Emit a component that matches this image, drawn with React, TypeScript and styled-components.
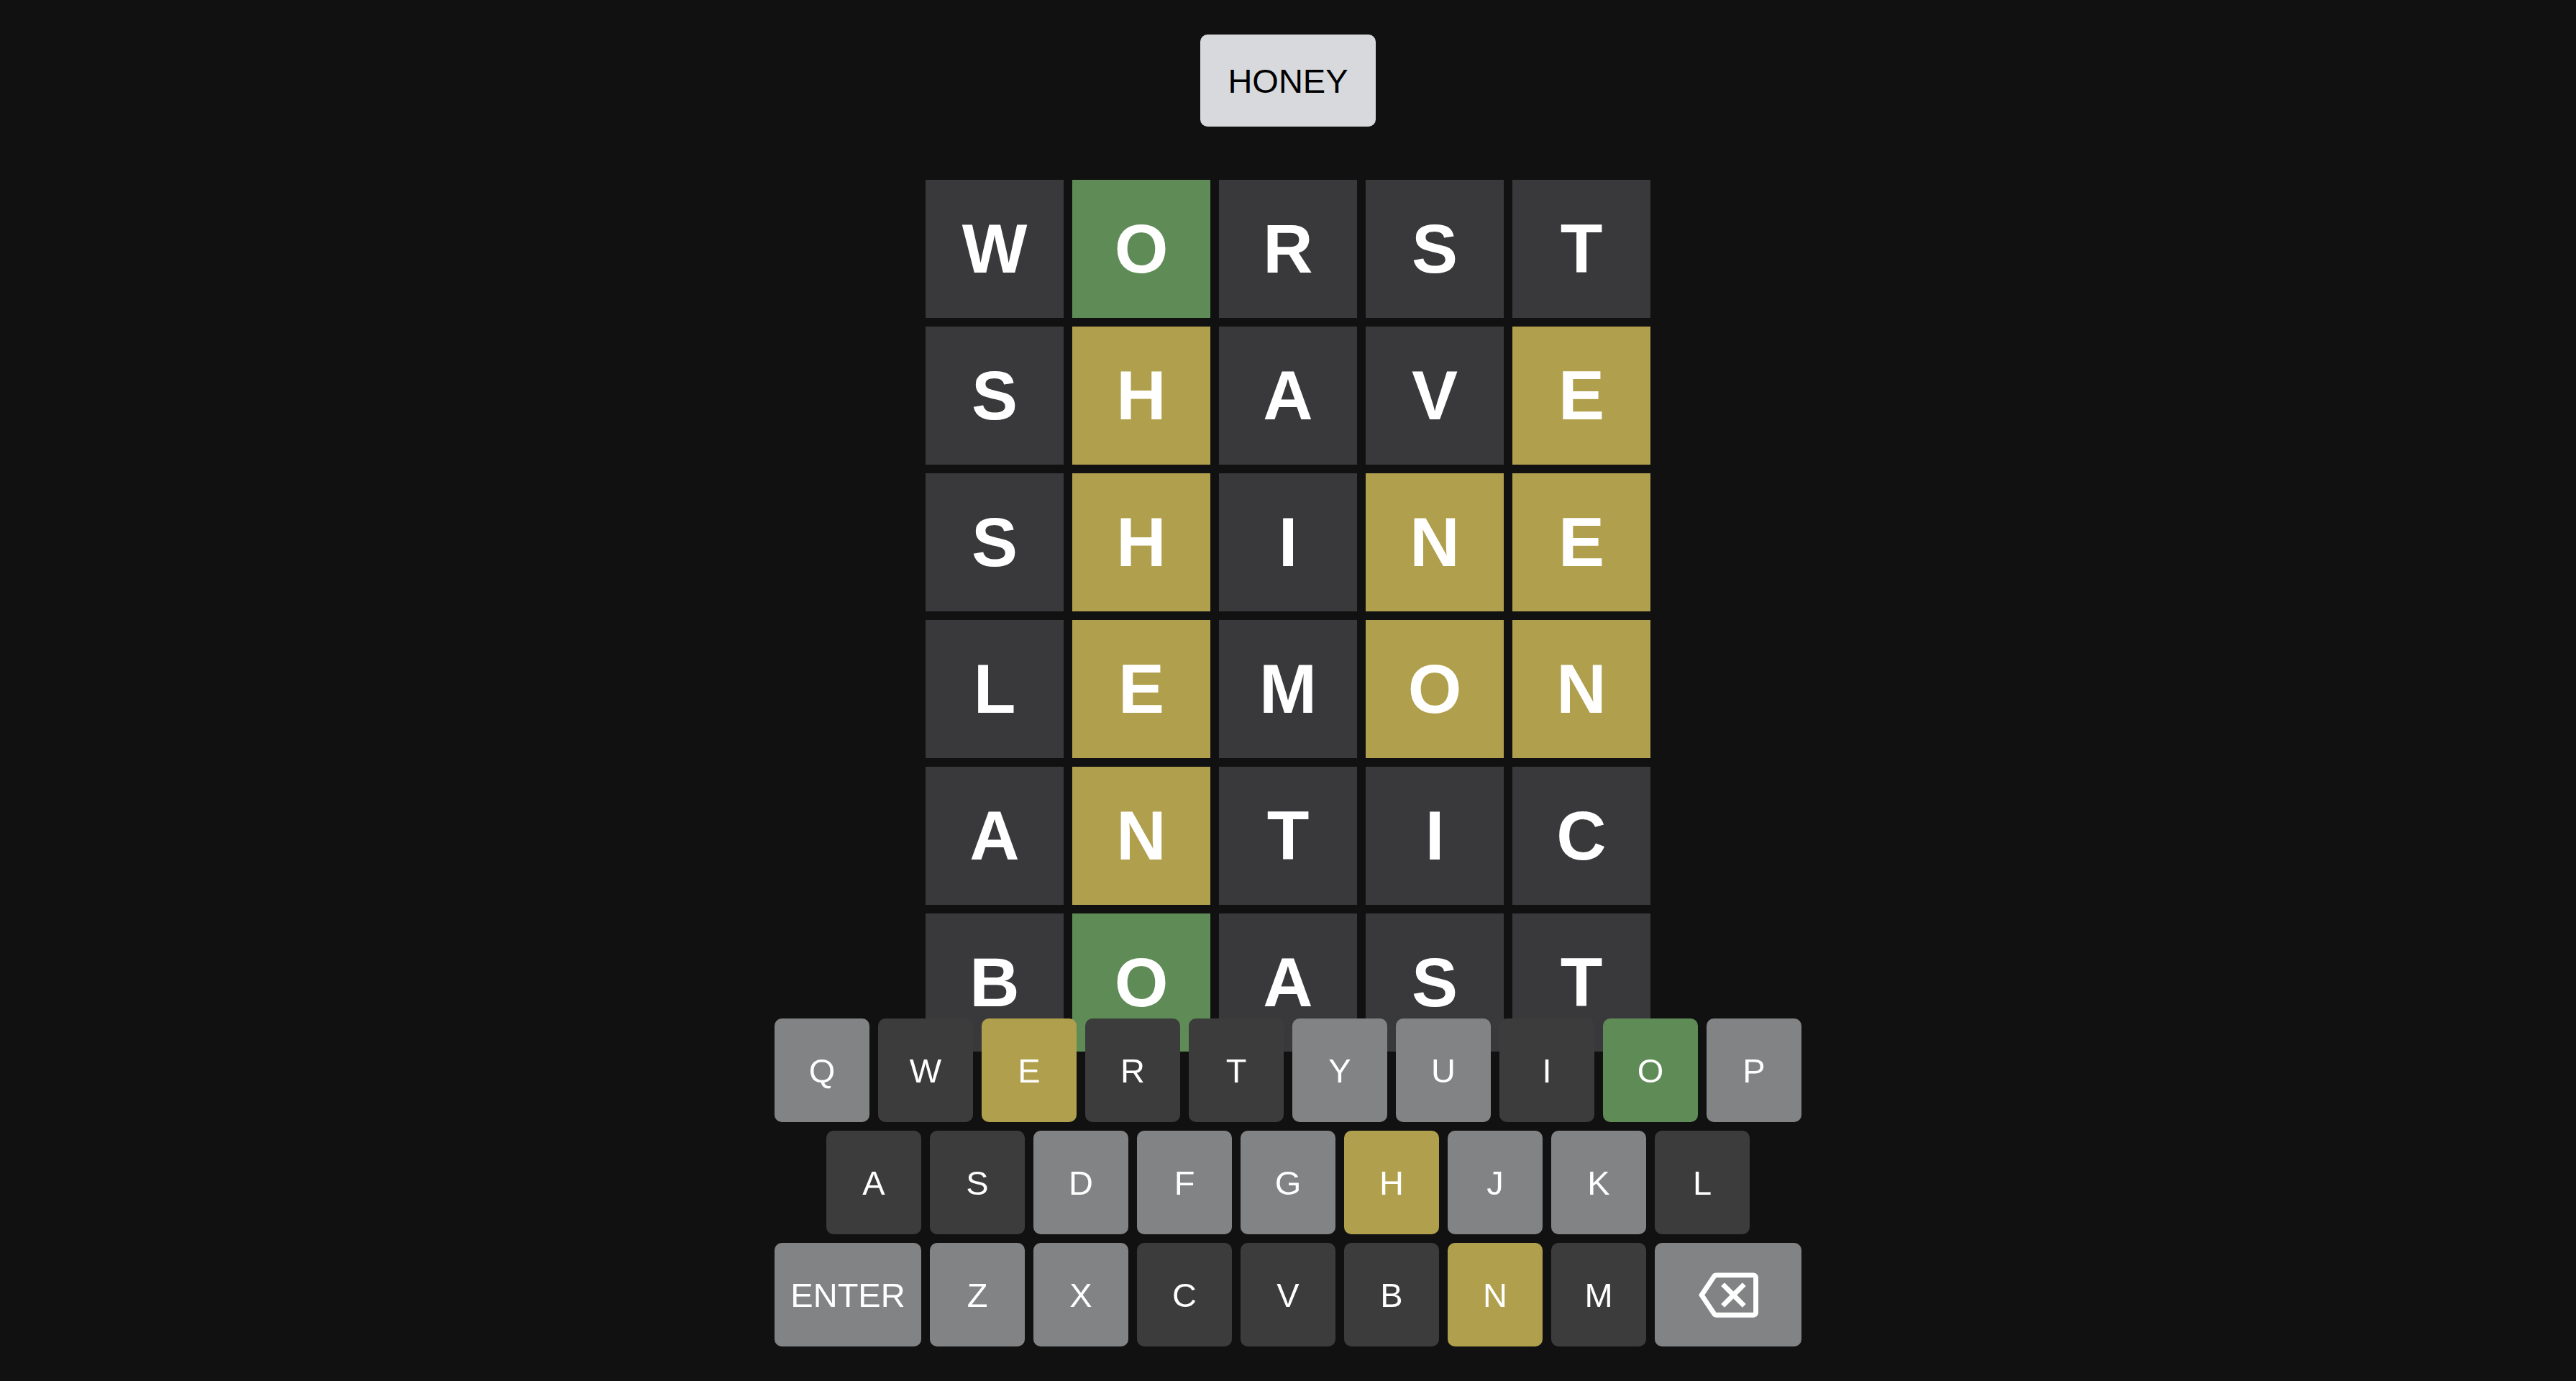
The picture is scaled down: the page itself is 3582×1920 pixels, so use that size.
import React from "react";
import styled, { createGlobalStyle } from "styled-components";

type TileState = "absent" | "present" | "correct";
type KeyState = "unused" | "absent" | "present" | "correct";

const GlobalStyle = createGlobalStyle`
  html, body {
    margin: 0;
    padding: 0;
    background: #111111;
    font-family: "Liberation Sans", Arial, sans-serif;
  }
  #root {
    min-height: 100vh;
  }
`;

const Page = styled.main`
  min-height: 100vh;
  display: flex;
  flex-direction: column;
  align-items: center;
  padding-top: 48px;
  box-sizing: border-box;
`;

const AnswerButton = styled.button`
  width: 244px;
  height: 128px;
  border: none;
  border-radius: 10px;
  background: #d8d9dc;
  color: #000000;
  font-family: "Liberation Sans", Arial, sans-serif;
  font-size: 47px;
  font-weight: 400;
  display: flex;
  align-items: center;
  justify-content: center;
  padding: 0;
  margin-bottom: 74px;
  cursor: pointer;
`;

const Board = styled.div`
  display: grid;
  grid-template-columns: repeat(5, 192px);
  grid-auto-rows: 192px;
  gap: 12px;
`;

const tileColors: Record<TileState, string> = {
  absent: "#39393c",
  present: "#b09f4c",
  correct: "#5f8c56",
};

const Tile = styled.div<{ $state: TileState }>`
  background: ${(p) => tileColors[p.$state]};
  color: #ffffff;
  display: flex;
  align-items: center;
  justify-content: center;
  font-family: "Liberation Sans", Arial, sans-serif;
  font-weight: 700;
  font-size: 96px;
  line-height: 1;
`;

const Keyboard = styled.div`
  position: fixed;
  left: 0;
  right: 0;
  bottom: 48px;
  display: flex;
  flex-direction: column;
  align-items: center;
  gap: 12px;
`;

const KeyRow = styled.div`
  display: flex;
  gap: 12px;
`;

const keyColors: Record<KeyState, string> = {
  unused: "#818384",
  absent: "#3b3c3b",
  present: "#b09f4c",
  correct: "#5f8c56",
};

const Key = styled.button<{ $state: KeyState; $wide?: boolean }>`
  width: ${(p) => (p.$wide ? "204px" : "132px")};
  height: 144px;
  border: none;
  border-radius: 10px;
  background: ${(p) => keyColors[p.$state]};
  color: #ffffff;
  font-family: "Liberation Sans", Arial, sans-serif;
  font-size: 47px;
  font-weight: 400;
  display: flex;
  align-items: center;
  justify-content: center;
  padding: 0;
  cursor: pointer;
`;

const BackspaceIcon = () => (
  <svg width="83" height="83" viewBox="0 0 24 24" aria-hidden="true">
    <path
      fill="#ffffff"
      d="M22 3H7c-.69 0-1.23.35-1.59.88L0 12l5.41 8.11c.36.53.9.89 1.59.89h15c1.1 0 2-.9 2-2V5c0-1.1-.9-2-2-2zm0 16H7.07L2.4 12l4.66-7H22v14zm-11.59-2L14 13.41 17.59 17 19 15.59 15.41 12 19 8.41 17.59 7 14 10.59 10.41 7 9 8.41 12.59 12 9 15.59z"
    />
  </svg>
);

const A: TileState = "absent";
const P: TileState = "present";
const C: TileState = "correct";

const guesses: { word: string; states: TileState[] }[] = [
  { word: "WORST", states: [A, C, A, A, A] },
  { word: "SHAVE", states: [A, P, A, A, P] },
  { word: "SHINE", states: [A, P, A, P, P] },
  { word: "LEMON", states: [A, P, A, P, P] },
  { word: "ANTIC", states: [A, P, A, A, A] },
  { word: "BOAST", states: [A, C, A, A, A] },
];

const keyStates: Record<string, KeyState> = {
  Q: "unused", W: "absent", E: "present", R: "absent", T: "absent",
  Y: "unused", U: "unused", I: "absent", O: "correct", P: "unused",
  A: "absent", S: "absent", D: "unused", F: "unused", G: "unused",
  H: "present", J: "unused", K: "unused", L: "absent",
  Z: "unused", X: "unused", C: "absent", V: "absent", B: "absent",
  N: "present", M: "absent",
};

const rows = ["QWERTYUIOP", "ASDFGHJKL", "ZXCVBNM"];

export default function App() {
  return (
    <>
      <GlobalStyle />
      <Page>
        <AnswerButton>HONEY</AnswerButton>
        <Board>
          {guesses.map((g, r) =>
            g.word.split("").map((ch, i) => (
              <Tile key={`${r}-${i}`} $state={g.states[i]}>
                {ch}
              </Tile>
            ))
          )}
        </Board>
        <Keyboard>
          {rows.map((row, ri) => (
            <KeyRow key={ri}>
              {ri === 2 && (
                <Key $state="unused" $wide>
                  ENTER
                </Key>
              )}
              {row.split("").map((ch) => (
                <Key key={ch} $state={keyStates[ch]}>
                  {ch}
                </Key>
              ))}
              {ri === 2 && (
                <Key $state="unused" $wide aria-label="backspace">
                  <BackspaceIcon />
                </Key>
              )}
            </KeyRow>
          ))}
        </Keyboard>
      </Page>
    </>
  );
}
